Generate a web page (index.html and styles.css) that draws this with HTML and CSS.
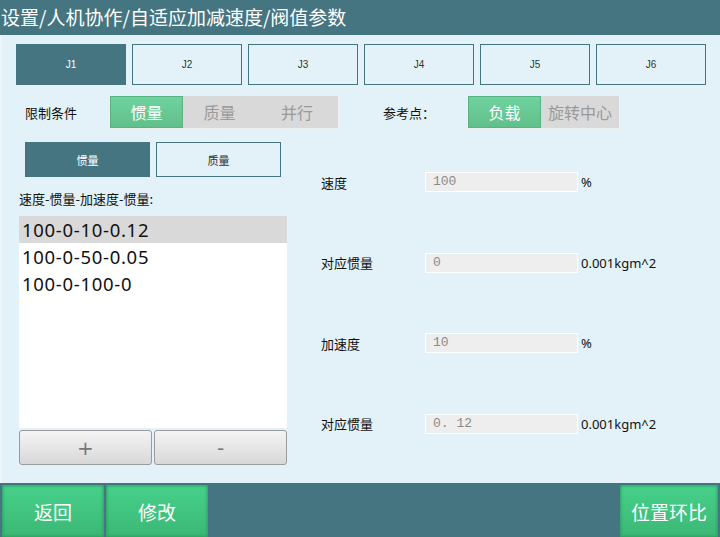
FILE: index.html
```html
<!DOCTYPE html>
<html>
<head>
<meta charset="utf-8">
<link rel="stylesheet" href="styles.css">
</head>
<body>
<div class="page">
  <div class="title">设置/人机协作/自适应加减速度/阀值参数</div>
  <div class="main">
    <div class="joints">
      <div class="joint active">J1</div>
      <div class="joint">J2</div>
      <div class="joint">J3</div>
      <div class="joint">J4</div>
      <div class="joint">J5</div>
      <div class="joint">J6</div>
    </div>
    <div class="cond-row">
      <div class="cond-label">限制条件</div>
      <div class="seg seg-cond">
        <div class="seg-item on">惯量</div>
        <div class="seg-item">质量</div>
        <div class="seg-item wide">并行</div>
      </div>
      <div class="ref-label">参考点：</div>
      <div class="seg seg-ref">
        <div class="seg-item on">负载</div>
        <div class="seg-item wide">旋转中心</div>
      </div>
    </div>
    <div class="content">
      <div class="left">
        <div class="subtabs">
          <div class="subtab active">惯量</div>
          <div class="subtab">质量</div>
        </div>
        <div class="list-label">速度-惯量-加速度-惯量:</div>
        <div class="list">
          <div class="list-item sel">100-0-10-0.12</div>
          <div class="list-item">100-0-50-0.05</div>
          <div class="list-item">100-0-100-0</div>
        </div>
        <div class="list-btns">
          <div class="gbtn">+</div>
          <div class="gbtn">-</div>
        </div>
      </div>
      <div class="right">
        <div class="field">
          <div class="f-label">速度</div>
          <div class="f-input">100</div>
          <div class="f-unit">%</div>
        </div>
        <div class="field">
          <div class="f-label">对应惯量</div>
          <div class="f-input">0</div>
          <div class="f-unit">0.001kgm^2</div>
        </div>
        <div class="field">
          <div class="f-label">加速度</div>
          <div class="f-input">10</div>
          <div class="f-unit">%</div>
        </div>
        <div class="field">
          <div class="f-label">对应惯量</div>
          <div class="f-input">0. 12</div>
          <div class="f-unit">0.001kgm^2</div>
        </div>
      </div>
    </div>
  </div>
  <div class="bottom">
    <div class="bbtn">返回</div>
    <div class="bbtn">修改</div>
    <div class="spacer"></div>
    <div class="bbtn last">位置环比</div>
  </div>
</div>
</body>
</html>
```
FILE: styles.css
```css
* { box-sizing: border-box; }
html, body { margin: 0; padding: 0; }
body {
  width: 720px;
  height: 537px;
  overflow: hidden;
  font-family: "Noto Sans", "Noto Sans CJK SC", sans-serif;
  background: #e3f2f8;
}
.page { width: 720px; height: 537px; display: flex; flex-direction: column; }
.title {
  height: 35px;
  background: #467582;
  color: #ffffff;
  font-family: "Noto Sans CJK SC", sans-serif;
  font-size: 19px;
  line-height: 34px;
  padding-left: 1px;
  white-space: nowrap;
}
.main {
  height: 448px;
  background: #e3f2f8;
  border-left: 2px solid #eef6f9;
  display: flex;
  flex-direction: column;
}
.joints {
  display: flex;
  gap: 6px;
  margin-top: 9px;
  padding-left: 14px;
}
.joint {
  width: 110px;
  height: 41px;
  border: 1px solid #467582;
  display: flex;
  align-items: center;
  justify-content: center;
  font-size: 10px;
  color: #333;
  font-family: "Liberation Sans", sans-serif;
}
.joint.active { background: #467582; color: #fff; }
.cond-row {
  display: flex;
  align-items: center;
  margin-top: 10px;
  height: 34px;
}
.cond-label {
  font-family: "Noto Sans CJK SC", sans-serif;
  font-size: 13px;
  color: #111;
  margin-left: 23px;
  width: 84px;
}
.seg {
  display: flex;
  height: 34px;
  background: #d9d9d9;
  border: 1px solid #f0f0f0;
}
.seg-cond { width: 230px; }
.seg-ref { width: 153px; }
.seg-item {
  width: 73px;
  display: flex;
  align-items: center;
  justify-content: center;
  font-family: "Noto Sans CJK SC", sans-serif;
  font-size: 16px;
  color: #9a9a9a;
}
.seg-item.wide { flex: 1; }
.seg-item.on {
  background: linear-gradient(#6fd39f, #61bf8b);
  border: 1px solid #58b282;
  color: #ffffff;
}
.ref-label {
  font-family: "Noto Sans CJK SC", sans-serif;
  font-size: 13px;
  color: #111;
  margin-left: 44px;
  width: 84px;
}
.content {
  display: flex;
  flex: 1;
}
.left {
  width: 268px;
  margin-left: 17px;
  display: flex;
  flex-direction: column;
}
.subtabs {
  display: flex;
  gap: 6px;
  margin-top: 13px;
  margin-left: 6px;
}
.subtab {
  width: 125px;
  height: 35px;
  border: 1px solid #467582;
  display: flex;
  align-items: center;
  justify-content: center;
  font-family: "Noto Sans CJK SC", sans-serif;
  font-size: 11px;
  color: #333;
}
.subtab.active { background: #467582; color: #fff; }
.list-label {
  font-family: "Noto Sans CJK SC", sans-serif;
  font-size: 13px;
  color: #111;
  margin-top: 13px;
  height: 26px;
  line-height: 18px;
}
.list {
  background: #ffffff;
  height: 212px;
}
.list-item {
  height: 27px;
  line-height: 27px;
  font-family: "Noto Sans", sans-serif;
  font-size: 18.5px;
  letter-spacing: 0.7px;
  color: #111;
  padding-left: 3px;
}
.list-item.sel { background: #d9d9d9; }
.list-btns {
  display: flex;
  gap: 2px;
  margin-top: 2px;
}
.gbtn {
  flex: 1;
  height: 35px;
  border: 1px solid #9b9b9b;
  border-radius: 3px;
  background: linear-gradient(#f4f4f4, #d8d8d8);
  display: flex;
  align-items: center;
  justify-content: center;
  font-family: "DejaVu Sans", sans-serif;
  font-size: 20px;
  color: #777;
}
.right {
  display: flex;
  flex-direction: column;
  margin-left: 34px;
  padding-top: 43px;
  gap: 60.5px;
}
.field {
  display: flex;
  align-items: center;
  height: 20px;
}
.f-label {
  width: 104px;
  font-family: "Noto Sans CJK SC", sans-serif;
  font-size: 13px;
  color: #111;
}
.f-input {
  width: 153px;
  height: 20px;
  background: #eeeeee;
  border: 1px solid #ffffff;
  font-family: "Liberation Mono", monospace;
  font-size: 13px;
  line-height: 18px;
  color: #8a8a8a;
  padding-left: 7px;
}
.f-unit {
  margin-left: 3px;
  font-family: "Noto Sans", sans-serif;
  font-size: 13px;
  color: #111;
}
.bottom {
  height: 54px;
  background: #467582;
  display: flex;
  padding: 2px 2px 0 2px;
  gap: 2px;
}
.bbtn {
  width: 102px;
  height: 52px;
  background: linear-gradient(#46d18b, #3cb775);
  box-shadow: inset 0 0 3px 1px #2f9e62;
  display: flex;
  align-items: center;
  justify-content: center;
  font-family: "Noto Sans CJK SC", sans-serif;
  font-size: 19px;
  color: #ffffff;
}
.bbtn.last { width: 98px; }
.spacer { flex: 1; }
```
